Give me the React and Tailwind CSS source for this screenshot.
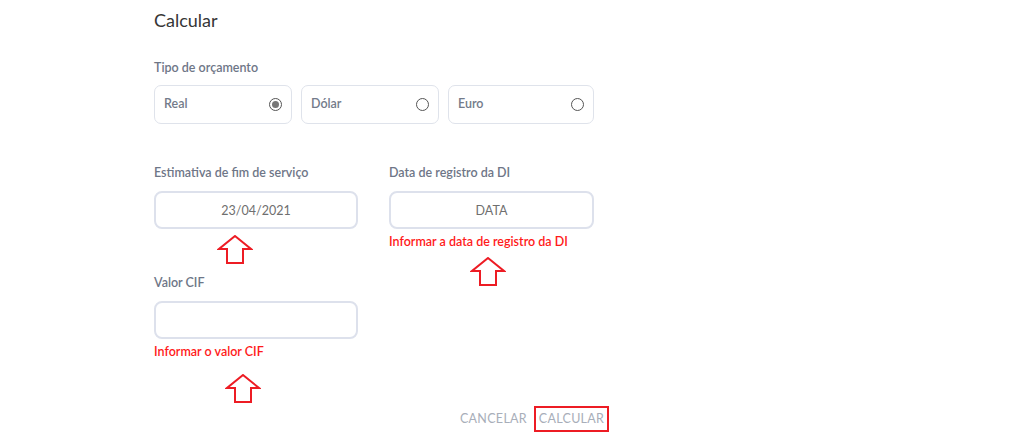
import { useState } from "react";

function UpArrow({ className }) {
  return (
    <svg
      width="36"
      height="30"
      viewBox="0 0 36 30"
      className={className}
      fill="none"
      stroke="#ed1c24"
      strokeWidth="2"
    >
      <path d="M18 1 L34 14 L26 14 L26 28 L10 28 L10 14 L2 14 Z" strokeLinejoin="miter" />
    </svg>
  );
}

function RadioCard({ label, checked, onClick, width }) {
  return (
    <button
      type="button"
      onClick={onClick}
      className={`flex h-[39px] items-center justify-between rounded-[7px] border border-[#dfe3eb] bg-white pl-[9px] pr-[9px] text-[12.5px] font-semibold text-[#737b8a] ${width}`}
    >
      <span>{label}</span>
      <span className="flex h-[13px] w-[13px] items-center justify-center rounded-full border border-[#555]">
        {checked && <span className="h-[7px] w-[7px] rounded-full bg-[#777]" />}
      </span>
    </button>
  );
}

function Field({ label, value, placeholder, error }) {
  return (
    <div className="flex flex-col">
      <label className="mb-[10px] text-[12.5px] font-semibold leading-[16px] text-[#6e7687]">
        {label}
      </label>
      <input
        type="text"
        defaultValue={value}
        placeholder={placeholder}
        className="h-[38px] w-full rounded-[8px] border-2 border-[#dde1ec] bg-white text-center text-[12.5px] text-[#6f6f6f] outline-none placeholder:text-[#6f6f6f]"
      />
      <div className="h-[26px] pt-[6px] text-[12.5px] font-semibold leading-[14px] text-[#ff1a1a]">
        {error}
      </div>
    </div>
  );
}

export default function App() {
  const [tipo, setTipo] = useState("Real");

  return (
    <div
      className="relative h-[444px] w-[1036px] bg-white"
      style={{ fontFamily: "Lato, 'Open Sans', sans-serif" }}
    >
      <div className="ml-[154px] flex w-[455px] flex-col pt-[8px]">
        <h1 className="text-[18px] leading-[24px] text-[#363636]">Calcular</h1>

        <div className="mt-[28px] text-[12.5px] font-semibold leading-[16px] text-[#6e7687]">
          Tipo de orçamento
        </div>
        <div className="mt-[9px] flex gap-[9px]">
          <RadioCard label="Real" width="w-[138px]" checked={tipo === "Real"} onClick={() => setTipo("Real")} />
          <RadioCard label="Dólar" width="w-[138px]" checked={tipo === "Dólar"} onClick={() => setTipo("Dólar")} />
          <RadioCard label="Euro" width="w-[146px]" checked={tipo === "Euro"} onClick={() => setTipo("Euro")} />
        </div>

        <div className="mt-[41px] grid grid-cols-[204px_205px] gap-x-[31px]">
          <Field label="Estimativa de fim de serviço" value="23/04/2021" />
          <Field label="Data de registro da DI" placeholder="DATA" error="Informar a data de registro da DI" />
        </div>

        <div className="mt-[20px] w-[204px]">
          <Field label="Valor CIF" error="Informar o valor CIF" />
        </div>

        <div className="mt-[41px] flex items-center justify-end gap-[5px] text-[12.5px] tracking-[0.3px] text-[#a8aeb9]">
          <button type="button" className="h-[26px] px-[2px]">CANCELAR</button>
          <button
            type="button"
            className="h-[26px] w-[75px] border-2 border-[#ed1c24]"
          >
            CALCULAR
          </button>
        </div>
      </div>

      <UpArrow className="absolute left-[217px] top-[235px]" />
      <UpArrow className="absolute left-[470px] top-[257px]" />
      <UpArrow className="absolute left-[225px] top-[374px]" />
    </div>
  );
}
